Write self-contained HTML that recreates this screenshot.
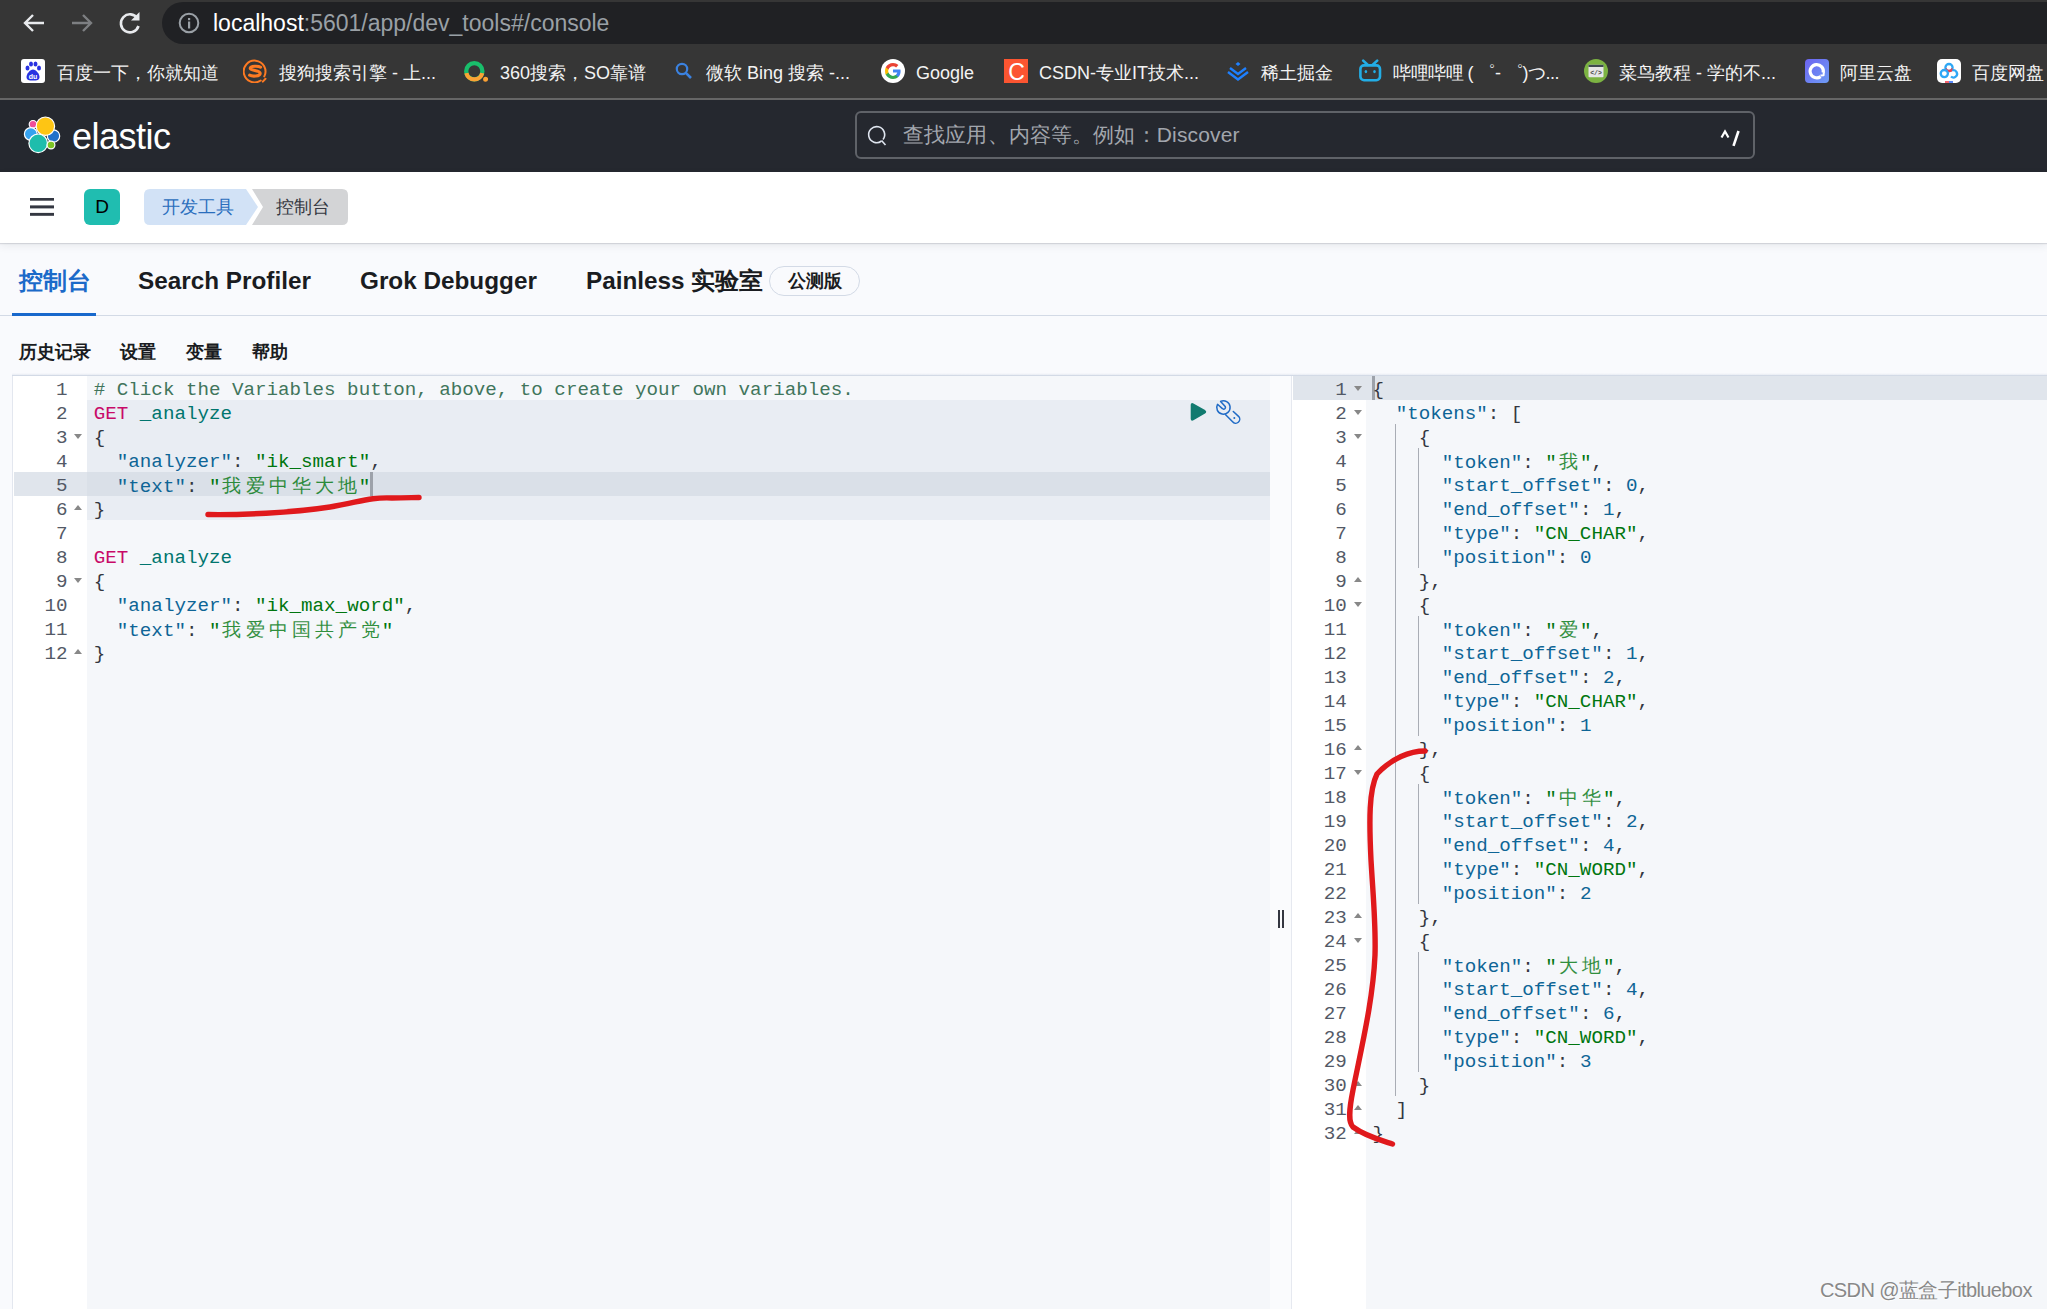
<!DOCTYPE html>
<html><head><meta charset="utf-8">
<style>
*{box-sizing:border-box;margin:0;padding:0}
html,body{width:2047px;height:1309px;overflow:hidden;background:#F9FAFD;font-family:"Liberation Sans",sans-serif}
.abs{position:absolute}
#chrome{position:absolute;left:0;top:0;width:2047px;height:98px;background:#363636}
#chromeline{position:absolute;left:0;top:98px;width:2047px;height:2px;background:#666}
#omni{position:absolute;left:162px;top:2px;width:2000px;height:42px;border-radius:21px;background:#202124}
.url{position:absolute;left:213px;top:8.5px;font-size:23px;color:#9aa0a6;white-space:nowrap;line-height:28px}
.url b{font-weight:normal;color:#fff}
.bm{position:absolute;top:60px;height:26px;font-size:18px;line-height:26px;color:#f3f3f3;white-space:nowrap}
.bmi{position:absolute;top:59px;width:24px;height:24px}
#khead{position:absolute;left:0;top:100px;width:2047px;height:72px;background:#25282F}
#search{position:absolute;left:855px;top:111px;width:900px;height:48px;border:2px solid #5f6268;border-radius:6px;background:#25282F}
#crumbbar{position:absolute;left:0;top:172px;width:2047px;height:71px;background:#fff;box-shadow:0 1px 1px rgba(40,50,70,.14),0 3px 8px rgba(40,50,70,.08)}
.tab{position:absolute;top:263.5px;font-size:24.3px;font-weight:bold;color:#1a1c21;white-space:nowrap;line-height:34px}
.sub{position:absolute;top:339px;font-size:18px;font-weight:bold;color:#1a1c21;line-height:26px;white-space:nowrap}
.code{position:absolute;font-family:"Liberation Mono",monospace;font-size:19.2px;line-height:24px;white-space:pre;color:#343741}
.ln{position:absolute;font-family:"Liberation Mono",monospace;font-size:19.2px;line-height:24px;color:#535966;text-align:right;width:40px}
.fold{position:absolute;width:0;height:0;border-left:4px solid transparent;border-right:4px solid transparent}
.fd{border-top:5px solid #888}
.fu{border-bottom:5px solid #888}
.k{color:#0E6596}
.s{color:#00760f}
.cm{color:#41755C}
.m{color:#c80a68}
.u{color:#00756E}
.n{color:#0E6596}
.p{color:#343741}
.c{display:inline-block;width:23.04px;text-align:center;font-family:"Liberation Serif",serif;opacity:.8}
</style></head><body>
<div id="chrome"></div>
<div id="chromeline"></div>
<div id="omni"></div>
<!-- nav icons -->
<svg class="abs" style="left:21px;top:9.5px" width="26" height="26" viewBox="0 0 26 26"><path d="M23 13H5M12 5L4 13L12 21" stroke="#e8eaed" stroke-width="2.4" fill="none"/></svg>
<svg class="abs" style="left:69px;top:9.5px" width="26" height="26" viewBox="0 0 26 26"><path d="M3 13H21M14 5L22 13L14 21" stroke="#7d7f82" stroke-width="2.4" fill="none"/></svg>
<svg class="abs" style="left:116px;top:8.5px" width="28" height="28" viewBox="0 0 28 28"><path d="M21.5 9.5A9 9 0 1 0 22.5 17" stroke="#e8eaed" stroke-width="2.6" fill="none"/><path d="M23.5 3V11.5H15Z" fill="#e8eaed"/></svg>
<svg class="abs" style="left:178px;top:12px" width="22" height="22" viewBox="0 0 22 22"><circle cx="11" cy="11" r="9.3" stroke="#9aa0a6" stroke-width="2" fill="none"/><rect x="10" y="9.5" width="2.2" height="7" fill="#9aa0a6"/><rect x="10" y="6" width="2.2" height="2.2" fill="#9aa0a6"/></svg>
<div class="url"><b>localhost</b>:5601/app/dev_tools#/console</div>

<!-- bookmarks -->
<div id="bookmarks">
<svg class="bmi" style="left:21px" viewBox="0 0 24 24"><rect x="0" y="0" width="24" height="24" rx="3" fill="#fff"/><g fill="#2932e1"><ellipse cx="6.5" cy="9" rx="2" ry="2.5"/><ellipse cx="10" cy="5" rx="2" ry="2.6"/><ellipse cx="14.5" cy="5" rx="2" ry="2.6"/><ellipse cx="18" cy="9" rx="2" ry="2.5"/><path d="M12 10.5C9 10.5 5.5 15 5.5 18C5.5 21 8 21.5 12 21.5C16 21.5 18.5 21 18.5 18C18.5 15 15 10.5 12 10.5Z"/></g><text x="12" y="20" font-size="7" font-weight="bold" fill="#fff" text-anchor="middle" font-family="Liberation Sans">du</text></svg>
<div class="bm" style="left:57px">百度一下，你就知道</div>
<svg class="bmi" style="left:243px" viewBox="0 0 24 24"><g fill="none" stroke="#FD7A22" stroke-linecap="round"><path d="M21.3 17.4A10.9 10.9 0 1 0 17.7 21.5" stroke-width="2"/><path d="M22.5 19.8L19.8 22.6" stroke-width="2"/><path d="M17.6 8.2C15.5 6.8 7.5 6.6 7.2 9.3C7 12 17.3 11.2 17.2 14.4C17.1 17.6 9 17.6 6.6 16.2" stroke-width="3.1"/></g></svg>
<div class="bm" style="left:279px">搜狗搜索引擎 - 上...</div>
<svg class="bmi" style="left:464px" viewBox="0 0 24 24"><circle cx="10.3" cy="12.3" r="8.1" stroke="#19BE6B" stroke-width="4.3" fill="none"/><path d="M2.4 14.1A8.1 8.1 0 0 0 18.2 14.1" stroke="#FCA234" stroke-width="4.3" fill="none"/><circle cx="21.6" cy="20.2" r="2.5" fill="#FCA234"/></svg>
<div class="bm" style="left:500px">360搜索，SO靠谱</div>
<svg class="bmi" style="left:672px" viewBox="0 0 24 24"><circle cx="10" cy="10" r="5.2" stroke="#3b82e0" stroke-width="2.2" fill="none"/><path d="M13.8 13.8L19 19" stroke="#3b82e0" stroke-width="2.6"/></svg>
<div class="bm" style="left:706px">微软 Bing 搜索 -...</div>
<svg class="bmi" style="left:881px" viewBox="0 0 24 24"><circle cx="12" cy="12" r="12" fill="#fff"/><path d="M19.6 12.2c0-.6-.1-1.1-.2-1.6H12v3h4.3c-.2 1-.8 1.8-1.6 2.4v2h2.6c1.5-1.4 2.3-3.4 2.3-5.8z" fill="#4285F4"/><path d="M12 20c2.2 0 4-.7 5.3-1.9l-2.6-2c-.7.5-1.6.8-2.7.8-2.1 0-3.9-1.4-4.5-3.3H4.8v2.1C6.1 18.2 8.9 20 12 20z" fill="#34A853"/><path d="M7.5 13.6c-.2-.5-.3-1-.3-1.6s.1-1.1.3-1.6V8.3H4.8C4.3 9.4 4 10.7 4 12s.3 2.6.8 3.7l2.7-2.1z" fill="#FBBC05"/><path d="M12 7.2c1.2 0 2.3.4 3.1 1.2l2.3-2.3C16 4.8 14.2 4 12 4 8.9 4 6.1 5.8 4.8 8.3l2.7 2.1C8.1 8.6 9.9 7.2 12 7.2z" fill="#EA4335"/></svg>
<div class="bm" style="left:916px">Google</div>
<svg class="bmi" style="left:1004px" viewBox="0 0 24 24"><rect width="24" height="24" fill="#fc5531"/><text x="12.5" y="20.5" font-size="23" fill="#fff" text-anchor="middle" font-family="Liberation Sans">C</text></svg>
<div class="bm" style="left:1039px">CSDN-专业IT技术...</div>
<svg class="bmi" style="left:1226px" viewBox="0 0 24 24"><path d="M12 3L14.5 5L12 7L9.5 5Z" fill="#1e80ff"/><path d="M4 9L12 15L20 9M2 13L12 20.5L22 13" stroke="#1e80ff" stroke-width="2.4" fill="none"/></svg>
<div class="bm" style="left:1261px">稀土掘金</div>
<svg class="bmi" style="left:1358px" viewBox="0 0 24 24"><g stroke="#23ADE5" stroke-width="2.6" stroke-linecap="round" fill="none"><path d="M5.2 1.6L9.6 5.8M19.2 1.6L14.8 5.8"/><rect x="2.4" y="6.4" width="19.6" height="14.8" rx="3.6"/></g><ellipse cx="7.9" cy="12.6" rx="1.3" ry="1.7" fill="#23ADE5"/><ellipse cx="16.5" cy="12.6" rx="1.3" ry="1.7" fill="#23ADE5"/></svg>
<div class="bm" style="left:1393px;letter-spacing:-0.5px">哔哩哔哩 ( ゜- ゜)つ...</div>
<svg class="bmi" style="left:1584px" viewBox="0 0 24 24"><circle cx="12" cy="12" r="12" fill="#7CB342"/><rect x="4.5" y="5.8" width="15" height="12.5" rx="1" fill="#E6E6E6"/><rect x="4.5" y="5.8" width="15" height="2.2" fill="#3F4A52"/><text x="12" y="15.6" font-size="6.5" font-weight="bold" fill="#4a4a4a" text-anchor="middle" font-family="Liberation Mono">&lt;/&gt;</text></svg>
<div class="bm" style="left:1619px">菜鸟教程 - 学的不...</div>
<svg class="bmi" style="left:1805px" viewBox="0 0 24 24"><defs><linearGradient id="ali" x1="0" y1="0" x2="1" y2="1"><stop offset="0" stop-color="#6C63F0"/><stop offset="1" stop-color="#6E9CF5"/></linearGradient></defs><rect width="24" height="24" rx="4" fill="url(#ali)"/><path d="M18.2 13.6A6.6 6.6 0 1 0 15.6 17.6" stroke="#fff" stroke-width="3.2" fill="none"/><path d="M15.5 16.5L18.6 16.2L18.8 13.2" stroke="#fff" stroke-width="2" fill="none" stroke-linejoin="round"/></svg>
<div class="bm" style="left:1840px">阿里云盘</div>
<svg class="bmi" style="left:1937px" viewBox="0 0 24 24"><rect width="24" height="24" rx="5" fill="#fff"/><g fill="none" stroke-width="2.3"><circle cx="12" cy="8.6" r="3.6" stroke="#2EA7F5"/><path d="M8.6 9.6A3.6 3.6 0 0 0 15.4 9.6" stroke="#F1404B"/><circle cx="7.3" cy="14.6" r="3.6" stroke="#2EA7F5"/><path d="M15.2 11.5A3.6 3.6 0 1 1 14 17.5" stroke="#2EA7F5"/></g><rect x="8" y="22.2" width="4" height="1.6" fill="#F1404B"/><rect x="12" y="22.2" width="4" height="1.6" fill="#2E6BF5"/></svg>
<div class="bm" style="left:1972px">百度网盘</div>
</div>

<div id="khead"></div>
<svg class="abs" style="left:23px;top:116px" width="38" height="38" viewBox="0 0 38 38">
<g stroke="#fff" stroke-width="1.2">
<circle cx="10" cy="8.3" r="3.8" fill="#F04E98"/>
<circle cx="7.8" cy="18" r="6.4" fill="#36A2EF"/>
<circle cx="30.5" cy="20" r="6.2" fill="#2171C9"/>
<circle cx="22.4" cy="10.2" r="9.2" fill="#FEC514"/>
<circle cx="15.2" cy="27.3" r="9.3" fill="#1EBDAC"/>
<circle cx="28" cy="29" r="3.9" fill="#7DC524"/>
</g></svg>
<div class="abs" style="left:72px;top:113.5px;font-size:36px;line-height:46px;color:#fff;letter-spacing:-0.5px">elastic</div>
<div id="search"></div>
<svg class="abs" style="left:866px;top:125px" width="22" height="22" viewBox="0 0 22 22"><path d="M17 14.5A8 8 0 1 0 15.5 16" stroke="#dfe5ef" stroke-width="1.6" fill="none"/><path d="M15.5 15.5L19.5 20" stroke="#dfe5ef" stroke-width="1.6"/></svg>
<div class="abs" style="left:903px;top:121px;font-size:21px;line-height:28px;color:#a2a6ad;letter-spacing:0.15px;white-space:nowrap">查找应用、内容等。例如：Discover</div>
<svg class="abs" style="left:1715px;top:126px" width="30" height="24" viewBox="0 0 30 24"><path d="M6.5 11.5L10 5.5L13.5 11.5" stroke="#fff" stroke-width="2.2" fill="none"/><path d="M18.5 19.8L23.5 5" stroke="#fff" stroke-width="2.6"/></svg>
<div id="crumbbar"></div>
<svg class="abs" style="left:30px;top:196px" width="24" height="22" viewBox="0 0 24 22"><rect x="0" y="2" width="24" height="2.7" fill="#343741"/><rect x="0" y="9.4" width="24" height="3" fill="#343741"/><rect x="0" y="16.9" width="24" height="2.9" fill="#343741"/></svg>
<div class="abs" style="left:84px;top:189px;width:36px;height:36px;border-radius:6px;background:#20BDB0;color:#000;font-size:19px;line-height:36px;text-align:center">D</div>
<svg class="abs" style="left:144px;top:189px" width="206" height="36" viewBox="0 0 206 36">
<path d="M204 6Q204 0 198 0H108L119 18L108 36H198Q204 36 204 30Z" fill="#D3D4D6"/>
<path d="M6 0H102L114 18L102 36H6Q0 36 0 30V6Q0 0 6 0Z" fill="#D2E2F6"/>
</svg>
<div class="abs" style="left:162px;top:194px;font-size:18px;line-height:26px;color:#2a6ebd">开发工具</div>
<div class="abs" style="left:276px;top:194px;font-size:18px;line-height:26px;color:#343741">控制台</div>

<!-- tabs -->
<div class="tab" style="left:19px;color:#1B6AC9">控制台</div>
<div class="abs" style="left:0;top:315px;width:2047px;height:1px;background:#D3DAE6"></div>
<div class="abs" style="left:12px;top:313px;width:84px;height:3px;background:#1868CC"></div>
<div class="tab" style="left:138px">Search Profiler</div>
<div class="tab" style="left:360px">Grok Debugger</div>
<div class="tab" style="left:586px">Painless 实验室</div>
<div class="abs" style="left:769px;top:266px;width:91px;height:30px;border:1px solid #D3DAE6;border-radius:15px;font-size:18px;line-height:28px;font-weight:bold;color:#1a1c21;text-align:center">公测版</div>
<div class="sub" style="left:19px">历史记录</div>
<div class="sub" style="left:120px">设置</div>
<div class="sub" style="left:186px">变量</div>
<div class="sub" style="left:252px">帮助</div>

<!--EDITOR-->
<div class="abs" style="left:12px;top:373px;width:2035px;height:2px;background:linear-gradient(rgba(211,218,230,0),rgba(211,218,230,.45))"></div>
<div class="abs" style="left:12px;top:375px;width:2035px;height:1px;background:#D3DAE6"></div>
<div class="abs" style="left:12px;top:376px;width:1px;height:933px;background:#E3E7EF"></div>
<div class="abs" style="left:13px;top:376px;width:74px;height:933px;background:#fff"></div>
<div class="abs" style="left:87px;top:376px;width:1183px;height:933px;background:#F5F7FA"></div>
<div class="abs" style="left:87px;top:400px;width:1183px;height:120px;background:#E9EDF3"></div>
<div class="abs" style="left:14px;top:472px;width:73px;height:24px;background:#E0E5EC"></div>
<div class="abs" style="left:87px;top:472px;width:1183px;height:24px;background:#DAE0E8"></div>
<div class="abs" style="left:1270px;top:376px;width:21px;height:933px;background:#FAFBFD"></div>
<div class="abs" style="left:1291px;top:376px;width:1px;height:933px;background:#E6E9F0"></div>
<div class="abs" style="left:1278px;top:910px;width:2px;height:18px;background:#343741"></div>
<div class="abs" style="left:1282px;top:910px;width:2px;height:18px;background:#343741"></div>
<div class="abs" style="left:1292px;top:376px;width:74px;height:933px;background:#fff"></div>
<div class="abs" style="left:1366px;top:376px;width:681px;height:933px;background:#F5F7FA"></div>
<div class="abs" style="left:1293px;top:376px;width:754px;height:24px;background:#E0E5EC"></div>
<div class="abs" style="left:1372px;top:376px;width:3px;height:24px;background:#9DA2AA"></div>
<div class="abs" style="left:370px;top:472px;width:3px;height:24px;background:#9DA2AA"></div>
<div class="abs" style="left:1395px;top:424px;width:1px;height:672px;background:#A9ADB5"></div>
<div class="abs" style="left:1418px;top:448px;width:1px;height:120px;background:#A9ADB5"></div>
<div class="abs" style="left:1418px;top:616px;width:1px;height:120px;background:#A9ADB5"></div>
<div class="abs" style="left:1418px;top:784px;width:1px;height:120px;background:#A9ADB5"></div>
<div class="abs" style="left:1418px;top:952px;width:1px;height:120px;background:#A9ADB5"></div>
<div class="ln" style="left:27.5px;top:377.5px">1</div>
<div class="code" style="left:93.8px;top:377.6px"><span class="cm"># Click the Variables button, above, to create your own variables.</span></div>
<div class="ln" style="left:27.5px;top:401.5px">2</div>
<div class="code" style="left:93.8px;top:401.6px"><span class="m">GET</span> <span class="u">_analyze</span></div>
<div class="ln" style="left:27.5px;top:425.5px">3</div>
<div class="fold fd" style="left:74px;top:434px"></div>
<div class="code" style="left:93.8px;top:425.6px"><span class="p">{</span></div>
<div class="ln" style="left:27.5px;top:449.5px">4</div>
<div class="code" style="left:93.8px;top:449.6px">  <span class="k">"analyzer"</span><span class="p">: </span><span class="s">"ik_smart"</span><span class="p">,</span></div>
<div class="ln" style="left:27.5px;top:473.5px">5</div>
<div class="code" style="left:93.8px;top:473.6px">  <span class="k">"text"</span><span class="p">: </span><span class="s">"<span class="c">我</span><span class="c">爱</span><span class="c">中</span><span class="c">华</span><span class="c">大</span><span class="c">地</span>"</span></div>
<div class="ln" style="left:27.5px;top:497.5px">6</div>
<div class="fold fu" style="left:74px;top:505px"></div>
<div class="code" style="left:93.8px;top:497.6px"><span class="p">}</span></div>
<div class="ln" style="left:27.5px;top:521.5px">7</div>
<div class="ln" style="left:27.5px;top:545.5px">8</div>
<div class="code" style="left:93.8px;top:545.6px"><span class="m">GET</span> <span class="u">_analyze</span></div>
<div class="ln" style="left:27.5px;top:569.5px">9</div>
<div class="fold fd" style="left:74px;top:578px"></div>
<div class="code" style="left:93.8px;top:569.6px"><span class="p">{</span></div>
<div class="ln" style="left:27.5px;top:593.5px">10</div>
<div class="code" style="left:93.8px;top:593.6px">  <span class="k">"analyzer"</span><span class="p">: </span><span class="s">"ik_max_word"</span><span class="p">,</span></div>
<div class="ln" style="left:27.5px;top:617.5px">11</div>
<div class="code" style="left:93.8px;top:617.6px">  <span class="k">"text"</span><span class="p">: </span><span class="s">"<span class="c">我</span><span class="c">爱</span><span class="c">中</span><span class="c">国</span><span class="c">共</span><span class="c">产</span><span class="c">党</span>"</span></div>
<div class="ln" style="left:27.5px;top:641.5px">12</div>
<div class="fold fu" style="left:74px;top:649px"></div>
<div class="code" style="left:93.8px;top:641.6px"><span class="p">}</span></div>
<div class="ln" style="left:1306.7px;top:377.5px">1</div>
<div class="fold fd" style="left:1354px;top:386px"></div>
<div class="code" style="left:1372.6px;top:377.6px"><span class="p">{</span></div>
<div class="ln" style="left:1306.7px;top:401.5px">2</div>
<div class="fold fd" style="left:1354px;top:410px"></div>
<div class="code" style="left:1372.6px;top:401.6px">  <span class="k">"tokens"</span><span class="p">: [</span></div>
<div class="ln" style="left:1306.7px;top:425.5px">3</div>
<div class="fold fd" style="left:1354px;top:434px"></div>
<div class="code" style="left:1372.6px;top:425.6px">    <span class="p">{</span></div>
<div class="ln" style="left:1306.7px;top:449.5px">4</div>
<div class="code" style="left:1372.6px;top:449.6px">      <span class="k">"token"</span><span class="p">: </span><span class="s">"<span class="c">我</span>"</span><span class="p">,</span></div>
<div class="ln" style="left:1306.7px;top:473.5px">5</div>
<div class="code" style="left:1372.6px;top:473.6px">      <span class="k">"start_offset"</span><span class="p">: </span><span class="n">0</span><span class="p">,</span></div>
<div class="ln" style="left:1306.7px;top:497.5px">6</div>
<div class="code" style="left:1372.6px;top:497.6px">      <span class="k">"end_offset"</span><span class="p">: </span><span class="n">1</span><span class="p">,</span></div>
<div class="ln" style="left:1306.7px;top:521.5px">7</div>
<div class="code" style="left:1372.6px;top:521.6px">      <span class="k">"type"</span><span class="p">: </span><span class="s">"CN_CHAR"</span><span class="p">,</span></div>
<div class="ln" style="left:1306.7px;top:545.5px">8</div>
<div class="code" style="left:1372.6px;top:545.6px">      <span class="k">"position"</span><span class="p">: </span><span class="n">0</span></div>
<div class="ln" style="left:1306.7px;top:569.5px">9</div>
<div class="fold fu" style="left:1354px;top:577px"></div>
<div class="code" style="left:1372.6px;top:569.6px">    <span class="p">},</span></div>
<div class="ln" style="left:1306.7px;top:593.5px">10</div>
<div class="fold fd" style="left:1354px;top:602px"></div>
<div class="code" style="left:1372.6px;top:593.6px">    <span class="p">{</span></div>
<div class="ln" style="left:1306.7px;top:617.5px">11</div>
<div class="code" style="left:1372.6px;top:617.6px">      <span class="k">"token"</span><span class="p">: </span><span class="s">"<span class="c">爱</span>"</span><span class="p">,</span></div>
<div class="ln" style="left:1306.7px;top:641.5px">12</div>
<div class="code" style="left:1372.6px;top:641.6px">      <span class="k">"start_offset"</span><span class="p">: </span><span class="n">1</span><span class="p">,</span></div>
<div class="ln" style="left:1306.7px;top:665.5px">13</div>
<div class="code" style="left:1372.6px;top:665.6px">      <span class="k">"end_offset"</span><span class="p">: </span><span class="n">2</span><span class="p">,</span></div>
<div class="ln" style="left:1306.7px;top:689.5px">14</div>
<div class="code" style="left:1372.6px;top:689.6px">      <span class="k">"type"</span><span class="p">: </span><span class="s">"CN_CHAR"</span><span class="p">,</span></div>
<div class="ln" style="left:1306.7px;top:713.5px">15</div>
<div class="code" style="left:1372.6px;top:713.6px">      <span class="k">"position"</span><span class="p">: </span><span class="n">1</span></div>
<div class="ln" style="left:1306.7px;top:737.5px">16</div>
<div class="fold fu" style="left:1354px;top:745px"></div>
<div class="code" style="left:1372.6px;top:737.6px">    <span class="p">},</span></div>
<div class="ln" style="left:1306.7px;top:761.5px">17</div>
<div class="fold fd" style="left:1354px;top:770px"></div>
<div class="code" style="left:1372.6px;top:761.6px">    <span class="p">{</span></div>
<div class="ln" style="left:1306.7px;top:785.5px">18</div>
<div class="code" style="left:1372.6px;top:785.6px">      <span class="k">"token"</span><span class="p">: </span><span class="s">"<span class="c">中</span><span class="c">华</span>"</span><span class="p">,</span></div>
<div class="ln" style="left:1306.7px;top:809.5px">19</div>
<div class="code" style="left:1372.6px;top:809.6px">      <span class="k">"start_offset"</span><span class="p">: </span><span class="n">2</span><span class="p">,</span></div>
<div class="ln" style="left:1306.7px;top:833.5px">20</div>
<div class="code" style="left:1372.6px;top:833.6px">      <span class="k">"end_offset"</span><span class="p">: </span><span class="n">4</span><span class="p">,</span></div>
<div class="ln" style="left:1306.7px;top:857.5px">21</div>
<div class="code" style="left:1372.6px;top:857.6px">      <span class="k">"type"</span><span class="p">: </span><span class="s">"CN_WORD"</span><span class="p">,</span></div>
<div class="ln" style="left:1306.7px;top:881.5px">22</div>
<div class="code" style="left:1372.6px;top:881.6px">      <span class="k">"position"</span><span class="p">: </span><span class="n">2</span></div>
<div class="ln" style="left:1306.7px;top:905.5px">23</div>
<div class="fold fu" style="left:1354px;top:913px"></div>
<div class="code" style="left:1372.6px;top:905.6px">    <span class="p">},</span></div>
<div class="ln" style="left:1306.7px;top:929.5px">24</div>
<div class="fold fd" style="left:1354px;top:938px"></div>
<div class="code" style="left:1372.6px;top:929.6px">    <span class="p">{</span></div>
<div class="ln" style="left:1306.7px;top:953.5px">25</div>
<div class="code" style="left:1372.6px;top:953.6px">      <span class="k">"token"</span><span class="p">: </span><span class="s">"<span class="c">大</span><span class="c">地</span>"</span><span class="p">,</span></div>
<div class="ln" style="left:1306.7px;top:977.5px">26</div>
<div class="code" style="left:1372.6px;top:977.6px">      <span class="k">"start_offset"</span><span class="p">: </span><span class="n">4</span><span class="p">,</span></div>
<div class="ln" style="left:1306.7px;top:1001.5px">27</div>
<div class="code" style="left:1372.6px;top:1001.6px">      <span class="k">"end_offset"</span><span class="p">: </span><span class="n">6</span><span class="p">,</span></div>
<div class="ln" style="left:1306.7px;top:1025.5px">28</div>
<div class="code" style="left:1372.6px;top:1025.6px">      <span class="k">"type"</span><span class="p">: </span><span class="s">"CN_WORD"</span><span class="p">,</span></div>
<div class="ln" style="left:1306.7px;top:1049.5px">29</div>
<div class="code" style="left:1372.6px;top:1049.6px">      <span class="k">"position"</span><span class="p">: </span><span class="n">3</span></div>
<div class="ln" style="left:1306.7px;top:1073.5px">30</div>
<div class="fold fu" style="left:1354px;top:1081px"></div>
<div class="code" style="left:1372.6px;top:1073.6px">    <span class="p">}</span></div>
<div class="ln" style="left:1306.7px;top:1097.5px">31</div>
<div class="fold fu" style="left:1354px;top:1105px"></div>
<div class="code" style="left:1372.6px;top:1097.6px">  <span class="p">]</span></div>
<div class="ln" style="left:1306.7px;top:1121.5px">32</div>
<div class="fold fu" style="left:1354px;top:1129px"></div>
<div class="code" style="left:1372.6px;top:1121.6px"><span class="p">}</span></div>
<!--/EDITOR-->
<!--EXTRA-->
<svg class="abs" style="left:1188px;top:401px" width="20" height="22" viewBox="0 0 20 22"><path d="M3.6 4Q3.6 2.4 5 3.2L16.6 9.9Q18 10.9 16.6 11.7L5 18.6Q3.6 19.4 3.6 17.8Z" fill="#117A6F" stroke="#117A6F" stroke-width="1.8" stroke-linejoin="round"/></svg>
<svg class="abs" style="left:1214px;top:399px" width="28" height="27" viewBox="0 0 28 27"><g fill="none" stroke="#1F6BC6" stroke-width="1.5" stroke-linecap="round" stroke-linejoin="round"><path d="M6.6 2.4A6.7 6.7 0 1 1 3.5 5.3L8.4 9.6A1.6 1.6 0 0 0 11 7.3Z"/><path d="M11.6 15.8L18.6 22.8A3.4 3.4 0 0 0 24.8 17.6L19.3 12.5"/></g><circle cx="20.3" cy="19.1" r="1" fill="#1F6BC6"/></svg>
<svg class="abs" style="left:0;top:0;pointer-events:none" width="2047" height="1309">
<g fill="none" stroke="#E0191C" stroke-width="5.4" stroke-linecap="round" stroke-linejoin="round">
<path d="M208 514.5C240 515 290 513 330 507C360 502 370 497 392 498C405 498 414 497.5 419 497.5"/>
<path d="M1425 751C1410 751 1392 758 1377 774C1369 790 1369 820 1371 860C1373 895 1376 925 1375 955C1373 1000 1362 1045 1353 1090C1349 1110 1348 1122 1353 1127C1365 1136 1380 1140 1392.5 1144"/>
</g></svg>
<div class="abs" style="left:1820px;top:1277px;font-size:20px;line-height:26px;color:#888;letter-spacing:-0.6px;white-space:nowrap;text-shadow:0 1px 1px #fff">CSDN @蓝盒子itbluebox</div>
<!--/EXTRA-->
</body></html>
